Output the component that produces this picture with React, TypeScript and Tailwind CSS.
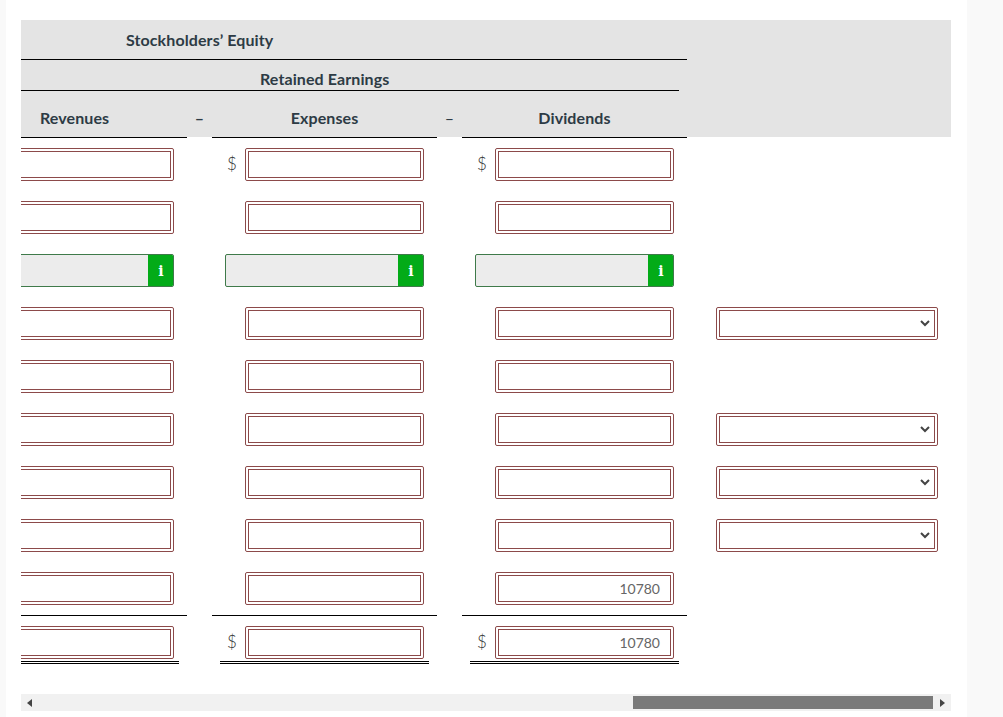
const Input = ({ value }: { value?: string }) => (
  <div className="w-[179px] h-[33px] shrink-0 border-4 border-double border-[#8c4a4a] rounded-[2px] bg-white flex items-center justify-end pr-[10px] text-[14px] text-[#666]">
    {value}
  </div>
);

const Info = ({ wide }: { wide?: boolean }) => (
  <div className={`${wide ? "w-[199px]" : "w-[179px]"} h-[33px] shrink-0 flex rounded-[2px] overflow-hidden border border-[#3f7a4a] bg-[#ececec]`}>
    <div className="flex-1" />
    <div className="w-[26px] -my-px -mr-px bg-[#03ab18] text-white flex items-center justify-center font-['DejaVu_Serif',serif] font-bold text-[14px] leading-none">i</div>
  </div>
);

const Select = () => (
  <div className="w-[222px] h-[33px] border-4 border-double border-[#8c4a4a] rounded-[2px] bg-white flex items-center justify-end pr-[4px]">
    <svg width="10" height="7" viewBox="0 0 10 7" fill="none" stroke="#444" strokeWidth="2"><path d="M1 1l4 4 4-4" /></svg>
  </div>
);

type Kind = "input" | "info";
type Line = "single" | "double";

const Dollar = ({ on }: { on?: boolean }) => (
  <span className="w-[20px] pl-[2px] pb-[3px] text-[#333] font-light text-[17px] leading-none">{on ? "$" : ""}</span>
);

const FirstCell = ({ kind, line }: { kind?: Kind; line?: Line }) => {
  if (line === "double") {
    return (
      <div className="w-[166px] shrink-0 overflow-hidden">
        <div className="w-[158px] h-[38px] border-b-[3px] border-double border-black flex justify-end pr-[5px]">
          <Input />
        </div>
      </div>
    );
  }
  return (
    <div className={`w-[166px] shrink-0 overflow-hidden flex justify-end pr-[13px] ${line === "single" ? "h-[44px] border-b border-black" : ""}`}>
      {kind === "info" ? <Info /> : <Input />}
    </div>
  );
};

const Cell = ({ dollar, kind, value, line }: { dollar?: boolean; kind?: Kind; value?: string; line?: Line }) => {
  if (kind === "info") {
    return (
      <div className="w-[225px] shrink-0 pl-[13px]">
        <Info wide />
      </div>
    );
  }
  if (line === "double") {
    return (
      <div className="w-[225px] shrink-0 pl-[8px]">
        <div className="w-[209px] h-[38px] border-b-[3px] border-double border-black flex items-start">
          <div className="h-[33px] flex items-center pl-[5px]">
            <Dollar on={dollar} />
            <Input value={value} />
          </div>
        </div>
      </div>
    );
  }
  return (
    <div className={`w-[225px] shrink-0 pl-[13px] flex items-start ${line === "single" ? "h-[44px] border-b border-black" : ""}`}>
      <div className="h-[33px] flex items-center">
        <Dollar on={dollar} />
        <Input value={value} />
      </div>
    </div>
  );
};

const rows: { d?: boolean; kind?: Kind; v?: string; sel?: boolean; line?: Line; h: string }[] = [
  { d: true, h: "h-[53px]" },
  { h: "h-[53px]" },
  { kind: "info", h: "h-[53px]" },
  { sel: true, h: "h-[53px]" },
  { h: "h-[53px]" },
  { sel: true, h: "h-[53px]" },
  { sel: true, h: "h-[53px]" },
  { sel: true, h: "h-[53px]" },
  { v: "10780", line: "single", h: "h-[54px]" },
  { d: true, v: "10780", line: "double", h: "h-[38px]" },
];

export default function App() {
  return (
    <div className="w-[1003px] h-[717px] overflow-hidden bg-white flex font-['Lato',sans-serif] text-[#2d3b45]">
      <div className="w-[6px] bg-[#f9f9f9]" />
      <div className="w-[961px] pt-[20px] pl-[15px]">
        <div className="w-[930px]">
          <div className="bg-[#e4e4e4] h-[117px] font-bold text-[16px] leading-none tracking-[0.1px]">
            <div className="w-[666px] h-[40px] border-b border-black flex items-center pl-[105px] pt-[1px]">Stockholders’ Equity</div>
            <div className="w-[658px] h-[31px] border-b border-black flex items-end pl-[239px] pb-[3px]">Retained Earnings</div>
            <div className="flex h-[46px] items-center text-center pt-[7px]">
              <div className="w-[166px] pl-[19px] text-left">Revenues</div>
              <div className="w-[25px]">–</div>
              <div className="w-[225px]">Expenses</div>
              <div className="w-[25px] font-normal">–</div>
              <div className="w-[225px]">Dividends</div>
            </div>
          </div>
          <div className="flex gap-[25px] h-px">
            <div className="w-[166px] bg-black" />
            <div className="w-[225px] bg-black" />
            <div className="w-[225px] bg-black" />
          </div>
          <div className="pt-[10px] flex flex-col">
            {rows.map((r, i) => (
              <div key={i} className={`flex gap-[25px] items-start shrink-0 ${r.h}`}>
                <FirstCell kind={r.kind} line={r.line} />
                <Cell dollar={r.d} kind={r.kind} line={r.line} />
                <Cell dollar={r.d} kind={r.kind} value={r.v} line={r.line} />
                {r.sel && <div className="pl-[4px]"><Select /></div>}
              </div>
            ))}
          </div>
          <div className="mt-[30px] h-[17px] bg-[#f1f1f1] flex items-center">
            <svg className="ml-[6px]" width="5" height="8" viewBox="0 0 5 8"><path d="M5 0v8L0 4z" fill="#444" /></svg>
            <div className="ml-[601px] w-[300px] h-[13px] bg-[#7a7a7a]" />
            <svg className="ml-[7px]" width="5" height="8" viewBox="0 0 5 8"><path d="M0 0v8l5-4z" fill="#444" /></svg>
          </div>
        </div>
      </div>
      <div className="flex-1 bg-[#f9f9f9]" />
    </div>
  );
}
